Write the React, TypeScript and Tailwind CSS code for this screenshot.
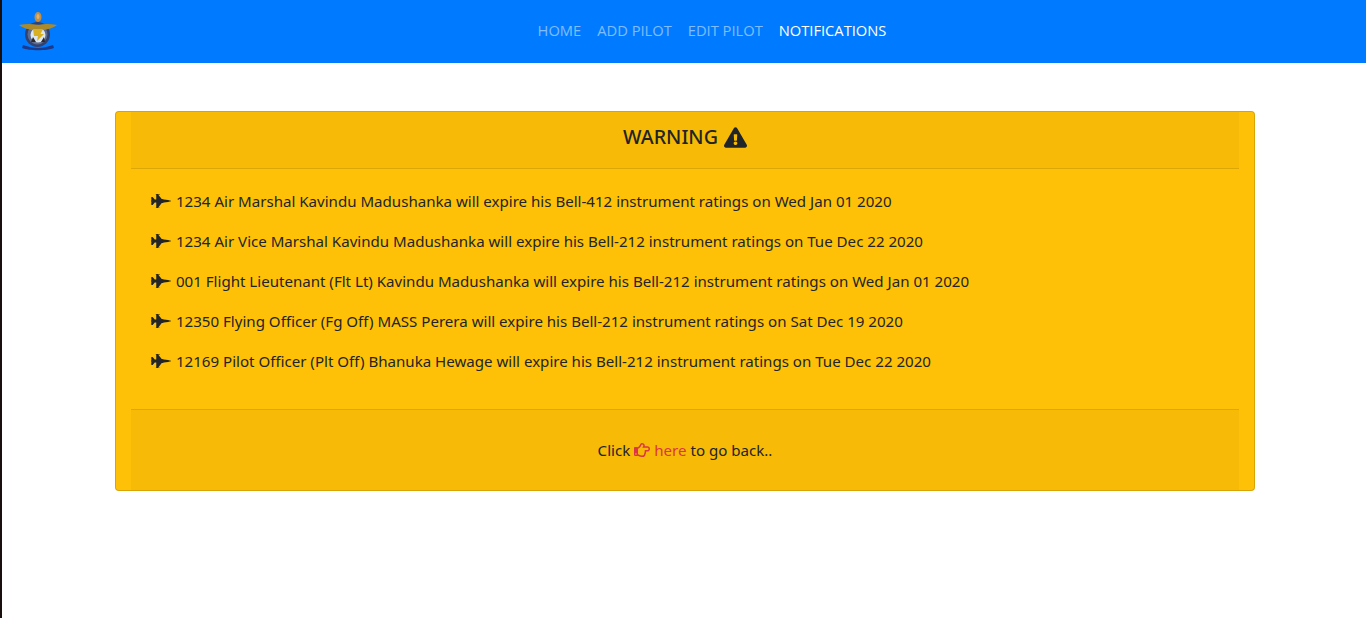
import { FaExclamationTriangle, FaFighterJet, FaRegHandPointRight } from "react-icons/fa"

const notices = [
  "1234 Air Marshal Kavindu Madushanka will expire his Bell-412 instrument ratings on Wed Jan 01 2020",
  "1234 Air Vice Marshal Kavindu Madushanka will expire his Bell-212 instrument ratings on Tue Dec 22 2020",
  "001 Flight Lieutenant (Flt Lt) Kavindu Madushanka will expire his Bell-212 instrument ratings on Wed Jan 01 2020",
  "12350 Flying Officer (Fg Off) MASS Perera will expire his Bell-212 instrument ratings on Sat Dec 19 2020",
  "12169 Pilot Officer (Plt Off) Bhanuka Hewage will expire his Bell-212 instrument ratings on Tue Dec 22 2020",
]

function Crest() {
  return (
    <svg width="40" height="40" viewBox="0 0 40 40" className="mt-[-1px] shrink-0 blur-[0.4px]">
      <ellipse cx="20" cy="6" rx="3.5" ry="5" fill="#c08f45" />
      <ellipse cx="20" cy="5.5" rx="1.5" ry="2.5" fill="#e0b070" />
      <circle cx="19.5" cy="23.5" r="12.5" fill="#33416f" />
      <circle cx="19.5" cy="23.5" r="10" fill="#5d6b8f" />
      <circle cx="20" cy="24" r="7.5" fill="#dbe6ee" />
      <path d="M1 14 C8 12.5 14 12.5 20 14 C26 12.5 32 12.5 39 14 C34 17.5 29 18.5 26 19 L14 19 C11 18.5 6 17.5 1 14Z" fill="#ab8a2b" />
      <path d="M15 18 L25 18 L22.5 23 L26 23 L19 30 L20 25 L16 25Z" fill="#d9b021" />
      <path d="M15 26 L18 31 L23 31 L26 26 L27 31 L13 31Z" fill="#2b2a2a" />
      <path d="M5 34 C11 36 15 37 20 37 C25 37 29 36 35 34 L36 37 C29 40 11 40 4 37Z" fill="#1b3a8c" />
    </svg>
  )
}

export default function App() {
  return (
    <div className="min-h-[618px] border-l-2 border-[#1a0f0f] bg-white font-['Noto_Sans',sans-serif] text-[#212529]">
      <nav className="flex h-[63px] items-center bg-[#007bff] pl-4">
        <Crest />
        <div className="flex flex-1 justify-center gap-4 pb-[2px] font-['Open_Sans',sans-serif] text-[14.7px]">
          <a className="text-white/50">HOME</a>
          <a className="text-white/50">ADD PILOT</a>
          <a className="text-white/50">EDIT PILOT</a>
          <a className="text-white">NOTIFICATIONS</a>
        </div>
      </nav>

      <div className="pl-[113px] pt-12">
        <div className="h-[380px] w-[1140px] rounded border border-black/15 bg-[#ffc107] px-[15px]">
          <div className="flex h-[57px] items-center justify-center gap-[6px] border-b border-black/10 bg-black/[.03] pb-[6px] text-[19.7px] font-medium">
            WARNING <FaExclamationTriangle className="text-[23px]" />
          </div>
          <ul className="h-[240px] space-y-4 px-5 pt-5">
            {notices.map((n) => (
              <li key={n} className="flex h-6 items-center gap-[5px] text-[15.08px]">
                <FaFighterJet className="text-[20px]" />
                {n}
              </li>
            ))}
          </ul>
          <div className="flex h-[81px] items-center justify-center gap-1 border-t border-black/10 bg-black/[.03] text-[15.08px]">
            Click
            <a className="flex items-center gap-1 text-[#dc3545]">
              <FaRegHandPointRight className="text-[16px]" /> here
            </a>
            to go back..
          </div>
        </div>
      </div>
    </div>
  )
}
